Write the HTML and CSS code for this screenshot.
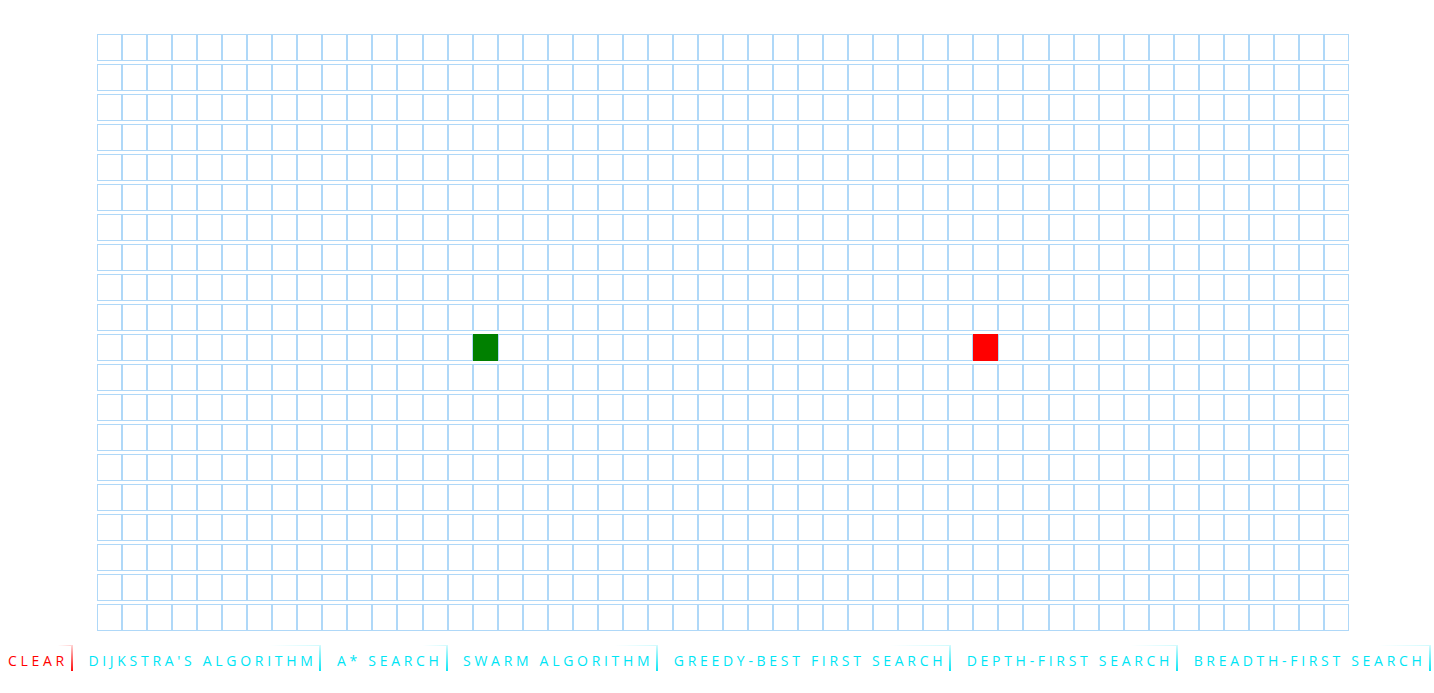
FILE: index.html
```html
<!DOCTYPE html>
<html lang="en">
<head>
    <meta charset="UTF-8">
    <meta name="viewport" content="width=device-width, initial-scale=1.0">
    <title>Pathfinding Visualizer</title>
    <link rel="stylesheet" href="styles.css">
</head>
<body>
    <div id="board" class="board"></div>

    <div class="menu">
        <span class="menu-item clear">CLEAR</span>
        <span class="menu-item">DIJKSTRA'S ALGORITHM</span>
        <span class="menu-item">A* SEARCH</span>
        <span class="menu-item">SWARM ALGORITHM</span>
        <span class="menu-item">GREEDY-BEST FIRST SEARCH</span>
        <span class="menu-item">DEPTH-FIRST SEARCH</span>
        <span class="menu-item">BREADTH-FIRST SEARCH</span>
    </div>

    <script>
        const board = document.getElementById('board');
        const rows = 20;
        const cols = 50;
        const start = { row: 10, col: 15 };
        const target = { row: 10, col: 35 };

        // Construir la cuadrícula
        for (let r = 0; r < rows; r++) {
            const rowEl = document.createElement('div');
            rowEl.className = 'row';
            for (let c = 0; c < cols; c++) {
                const cell = document.createElement('div');
                cell.className = 'cell';
                if (r === start.row && c === start.col) cell.classList.add('start');
                if (r === target.row && c === target.col) cell.classList.add('target');
                rowEl.appendChild(cell);
            }
            board.appendChild(rowEl);
        }
    </script>
</body>
</html>
```

FILE: styles.css
```css
body {
    margin: 8px 0 8px 8px;
    font-family: "Open Sans", "Noto Sans", sans-serif;
    background-color: #fff;
    overflow: hidden;
}
.board {
    width: 1252px;
    margin: 26px 0 0 89px;
    display: flex;
    flex-direction: column;
    gap: 3px;
}
.row {
    display: grid;
    grid-template-columns: repeat(50, 1fr);
}
.cell {
    height: 27px;
    border: 1px solid rgb(175, 216, 248);
    box-sizing: border-box;
}
.cell.start {
    background-color: #008000;
    border-color: #008000;
}
.cell.target {
    background-color: #ff0000;
    border-color: #ff0000;
}
.menu {
    margin-top: 14px;
    display: flex;
    gap: 15.5px;
    white-space: nowrap;
    font-size: 14px;
    letter-spacing: 3.7px;
    color: #00e5f5;
}
.menu-item {
    flex-shrink: 0;
    height: 26px;
    box-sizing: border-box;
    padding: 3px 3px 0 0;
    line-height: 23px;
    border-top: 1px solid;
    border-right: 2px solid;
    border-image: linear-gradient(to top left, #00e5f5 0%, rgba(0, 229, 245, 0.5) 30%, rgba(0, 229, 245, 0) 60%) 1;
}
.menu-item.clear {
    color: #ff0000;
    border-image: linear-gradient(to top left, #ff0000 0%, rgba(255, 0, 0, 0.5) 30%, rgba(255, 0, 0, 0) 60%) 1;
}
```
